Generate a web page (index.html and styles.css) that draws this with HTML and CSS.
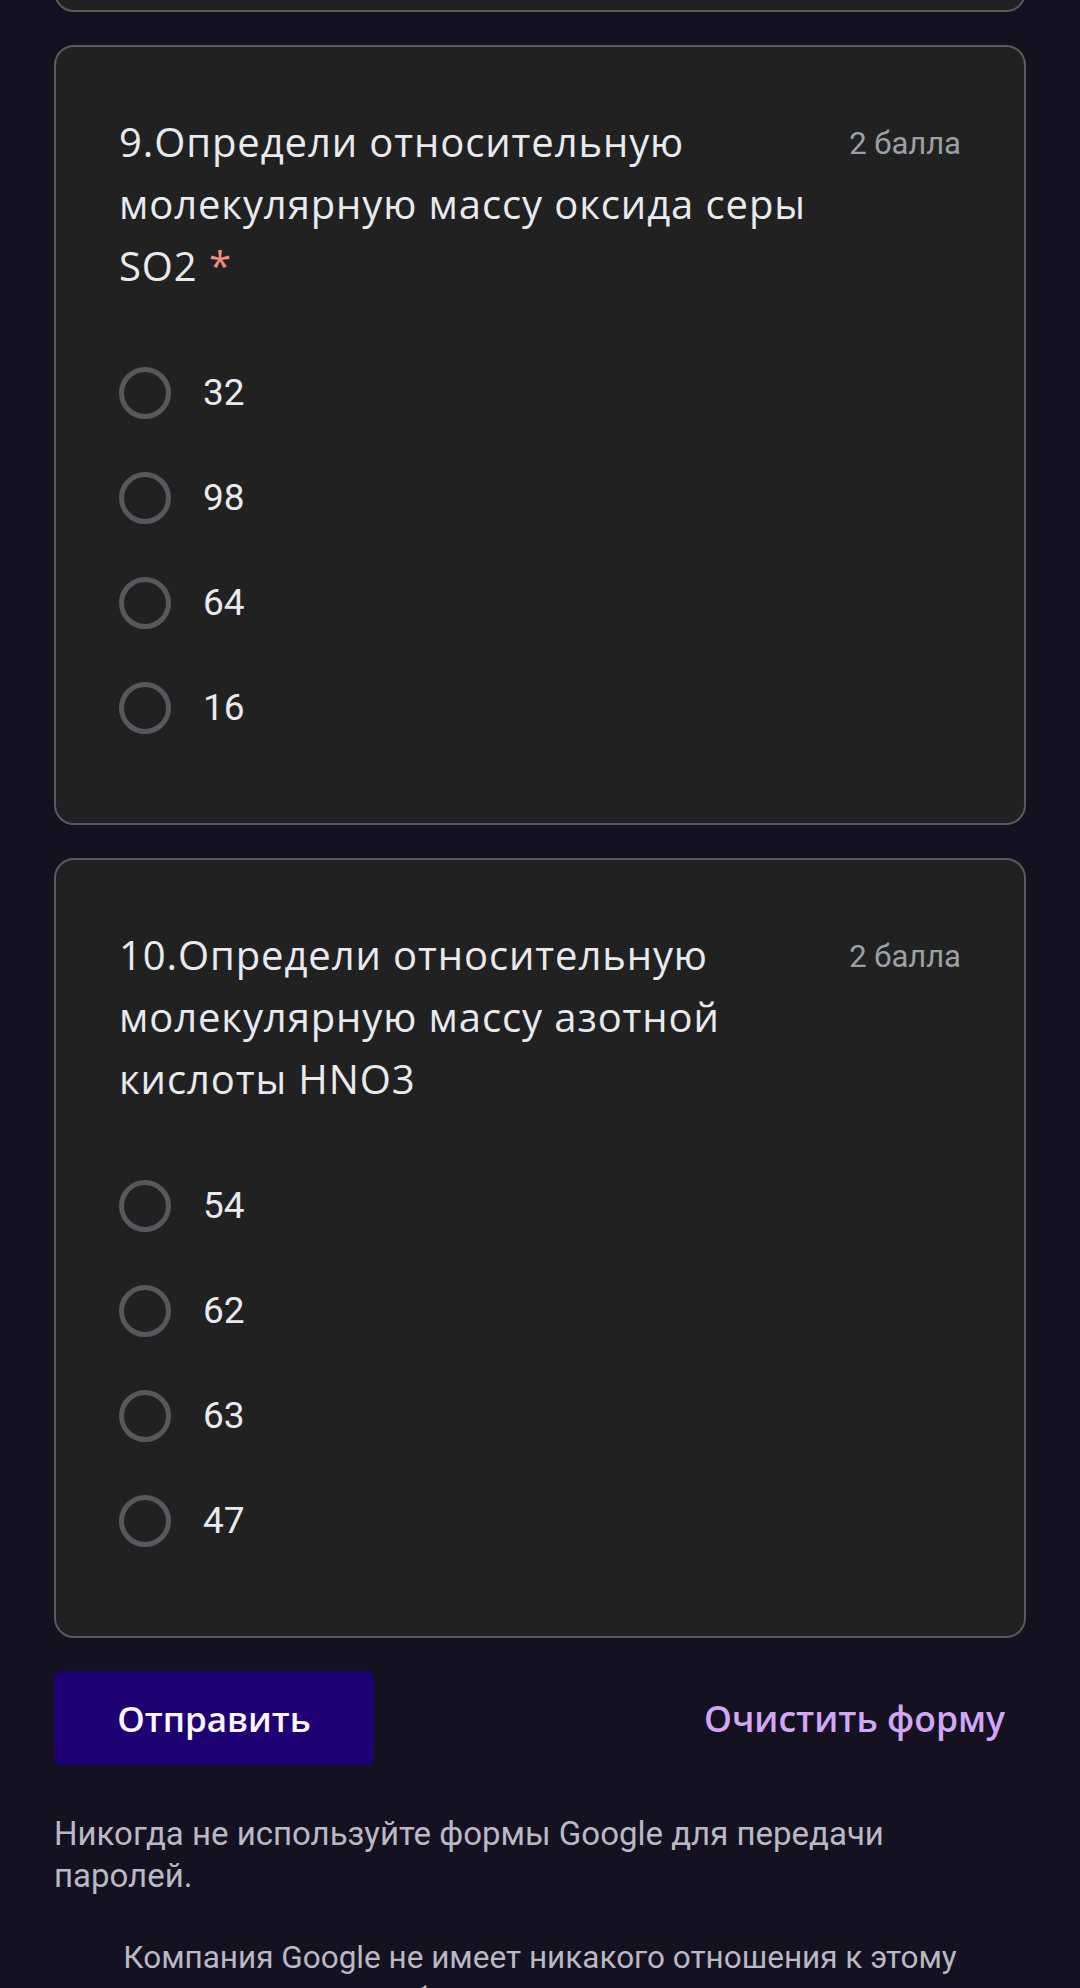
FILE: index.html
```html
<!DOCTYPE html>
<html lang="ru">
  <head>
    <meta charset="UTF-8">
    <meta name="viewport" content="width=device-width, initial-scale=1.0">
    <title>Тест по химии</title>
    <link rel="stylesheet" href="styles.css">
  </head>
  <body>
    <div class="form">
      <div class="card card-prev"></div>

      <div class="card">
        <div class="question-head">
          <div class="question-title">9.Определи относительную молекулярную массу оксида серы SO2 <span class="required">*</span></div>
          <div class="points">2 балла</div>
        </div>
        <div class="options">
          <label class="option"><span class="radio"></span><span class="option-text">32</span></label>
          <label class="option"><span class="radio"></span><span class="option-text">98</span></label>
          <label class="option"><span class="radio"></span><span class="option-text">64</span></label>
          <label class="option"><span class="radio"></span><span class="option-text">16</span></label>
        </div>
      </div>

      <div class="card">
        <div class="question-head">
          <div class="question-title">10.Определи относительную молекулярную массу азотной кислоты HNO3</div>
          <div class="points">2 балла</div>
        </div>
        <div class="options">
          <label class="option"><span class="radio"></span><span class="option-text">54</span></label>
          <label class="option"><span class="radio"></span><span class="option-text">62</span></label>
          <label class="option"><span class="radio"></span><span class="option-text">63</span></label>
          <label class="option"><span class="radio"></span><span class="option-text">47</span></label>
        </div>
      </div>

      <div class="actions">
        <button class="submit-button">Отправить</button>
        <button class="clear-button">Очистить форму</button>
      </div>

      <p class="password-note">Никогда не используйте формы Google для передачи паролей.</p>
      <p class="footer-note">Компания Google не имеет никакого отношения к этому контенту. Сообщение о нарушении - Условия использования - Политика конфиденциальности</p>
    </div>
  </body>
</html>
```

FILE: styles.css
```css
:root{
  --bg-main-color: #141120;
  --bg-card-color: #212121;
  --card-border-color: #5a5a5c;
  --text-color: #e8eaed;
  --muted-color: #9aa0a6;
  --radio-color: #55585c;
}
*{
    margin: 0;
    padding: 0;
    box-sizing: border-box;
}
body{
    background-color: var(--bg-main-color);
    color: var(--text-color);
    font-family: Roboto, "Noto Sans", sans-serif;
    height: 1988px;
    overflow: hidden;
}
.form{
    padding: 0 54px;
    margin-top: -119px;
}
.card{
    background-color: var(--bg-card-color);
    border: 2px solid var(--card-border-color);
    border-radius: 20px;
    padding: 64px 63px 63px 63px;
    margin-bottom: 33px;
}
.card-prev{
    height: 109px;
}
.question-head{
    display: flex;
    justify-content: space-between;
    align-items: flex-start;
    gap: 30px;
}
.question-title{
    font-family: "Open Sans", "Noto Sans", sans-serif;
    font-size: 40px;
    letter-spacing: 0.9px;
    line-height: 62px;
    color: var(--text-color);
    max-width: 720px;
}
.required{
    color: #f28b82;
}
.points{
    font-size: 31px;
    line-height: 62px;
    color: var(--muted-color);
    white-space: nowrap;
    padding-top: 2px;
}
.options{
    margin-top: 43px;
    display: flex;
    flex-direction: column;
}
.option{
    height: 105px;
    display: flex;
    align-items: center;
    gap: 32px;
}
.radio{
    width: 52px;
    height: 52px;
    border: 5px solid var(--radio-color);
    border-radius: 50%;
    flex-shrink: 0;
}
.option-text{
    font-size: 37px;
    color: var(--text-color);
}
.actions{
    display: flex;
    justify-content: space-between;
    align-items: center;
}
.submit-button{
    width: 320px;
    height: 94px;
    background-color: #1e0273;
    color: #fbf6ff;
    border: none;
    border-radius: 8px;
    font-family: "Open Sans", "Noto Sans", sans-serif;
    font-size: 35px;
    font-weight: 600;
}
.clear-button{
    background: none;
    border: none;
    color: #d1a6f5;
    font-family: "Open Sans", "Noto Sans", sans-serif;
    font-size: 35.5px;
    font-weight: 600;
    padding: 0 21px;
    height: 94px;
}
.password-note{
    margin-top: 48px;
    font-size: 33px;
    line-height: 42px;
    color: #bab8c2;
    max-width: 900px;
}
.footer-note{
    margin-top: 40px;
    padding: 0 40px;
    font-size: 31.5px;
    line-height: 42px;
    color: #bab8c2;
    text-align: center;
}
```
